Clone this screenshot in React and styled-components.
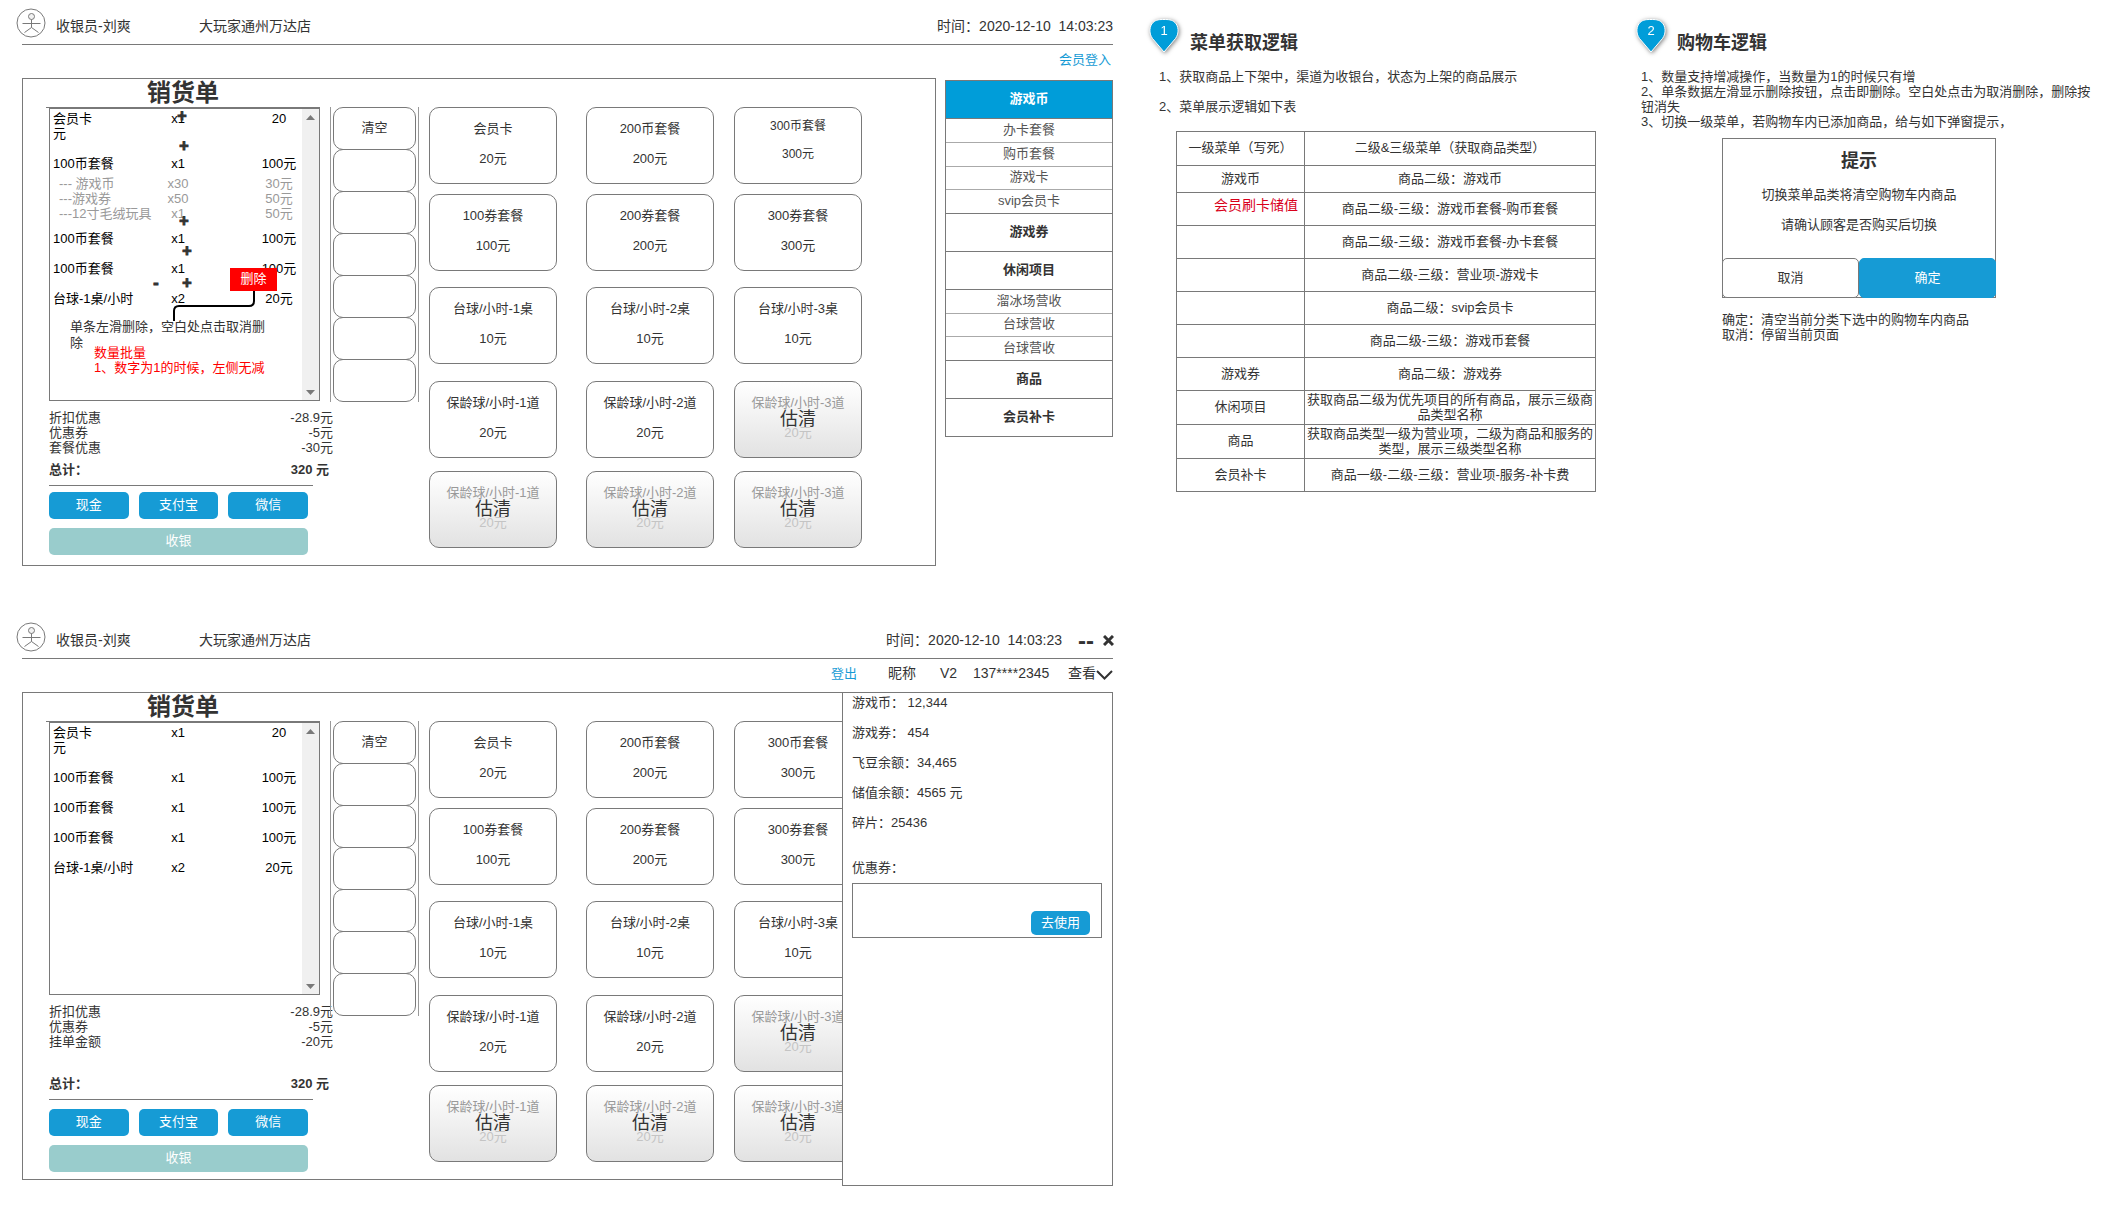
import React from "react";
import styled, { createGlobalStyle } from "styled-components";

const GlobalStyle = createGlobalStyle`
  * {
    box-sizing: border-box;
  }

  body {
    margin: 0;
    background: #fff;
    color: #333;
    font-family: "Liberation Sans", "Noto Sans CJK SC", sans-serif;
    font-size: 13px;
    line-height: 15px;
  }

  h1, h2, h3, p, ul, dl, dd {
    margin: 0;
    padding: 0;
  }

  ul {
    list-style: none;
  }

  button {
    margin: 0;
    padding: 0;
    border: 0;
    background: none;
    color: inherit;
    font: inherit;
    cursor: pointer;
  }
`;

const Page = styled.main`
  display: grid;
  grid-template-columns: minmax(0, 1091fr) minmax(0, 453fr) minmax(0, 468fr);
  column-gap: 34px;
  min-height: 100vh;
  padding: 0 0 32px 22px;
`;

const Terminals = styled.div`
  display: flex;
  flex-direction: column;
  gap: 48px;
`;

/* ---------- terminal header ---------- */

const TopBar = styled.header`
  display: flex;
  align-items: center;
  height: 45px;
  padding-top: 8px;
  border-bottom: 1px solid #797979;
  font-size: 14px;
  white-space: nowrap;
`;

const Avatar = styled.svg`
  flex: none;
  align-self: flex-start;
  margin-left: -6px;
`;

const Cashier = styled.span`
  width: 143px;
  margin-left: 10px;
`;

const Clock = styled.time`
  margin-left: auto;
`;

const WindowControls = styled.div`
  display: flex;
  align-items: center;
  gap: 9px;
  margin: 0 -1px 0 16px;
`;

const Minimize = styled.button`
  font-size: 24px;
  font-weight: bold;
`;

const Close = styled.button`
  display: flex;
`;

const MemberBar = styled.div`
  display: flex;
  justify-content: flex-end;
  align-items: center;
  height: 28px;
  margin-bottom: 5px;
`;

const BlueLink = styled.a`
  padding-right: 2px;
  color: #169bd5;
  font-size: 13px;
  text-decoration: none;
`;

const MemberInfo = styled.div`
  display: grid;
  grid-template-columns: 57px 52px 33px 95px auto;
  align-items: center;
  font-size: 14px;
`;

const ViewButton = styled.button`
  display: flex;
  align-items: center;
`;

/* ---------- terminal body ---------- */

const Workspace = styled.div`
  position: relative;
  display: flex;
  align-items: flex-start;
  gap: 9px;
`;

const Panel = styled.section`
  flex: 1;
  display: flex;
  align-items: flex-start;
  gap: 10px;
  min-width: 0;
  min-height: 488px;
  padding-left: 23px;
  border: 1px solid #797979;
`;

const Cart = styled.div`
  flex: none;
  width: 274px;
`;

const CartTitle = styled.h1`
  height: 29px;
  border-bottom: 1px solid #797979;
  font-size: 24px;
  line-height: 28px;
  text-align: center;
`;

const CartBody = styled.div`
  margin-left: 3px;
`;

const ListBox = styled.div`
  position: relative;
  display: flex;
  height: ${(p) => p.$height}px;
  border: 1px solid #797979;
  color: #000;
`;

const Items = styled.ul`
  flex: 1;
  padding: 2px 0 0 3px;
`;

const Item = styled.li`
  margin-bottom: 15px;
`;

const ItemRow = styled.div`
  display: grid;
  grid-template-columns: 105px 40px 1fr;
`;

const Name = styled.span`
  white-space: pre-line;
`;

const Qty = styled.span`
  text-align: center;
`;

const Price = styled.span`
  justify-self: end;
  width: 46px;
  text-align: center;
`;

const SubItems = styled.ul`
  margin: 5px 0 -5px;
  color: #999;

  ${Name} {
    padding-left: 6px;
    white-space: nowrap;
  }
`;

const ScrollTrack = styled.div`
  display: flex;
  flex-direction: column;
  justify-content: space-between;
  align-items: center;
  width: 17px;
  padding: 6px 0 5px;
  background: #f0f0f0;
`;

const Step = styled.button`
  position: absolute;
  left: ${(p) => p.$x}px;
  top: ${(p) => p.$y}px;
  width: 12px;
  height: 12px;
  color: #333;
  font-size: 16px;
  font-weight: bold;
  line-height: 12px;
  -webkit-text-stroke: 1px #333;
`;

const DeleteButton = styled.button`
  position: absolute;
  left: 180px;
  top: 159px;
  width: 47px;
  height: 23px;
  padding-bottom: 2px;
  background: #f00;
  color: #fff;
`;

const Connector = styled.svg`
  position: absolute;
  left: 122px;
  top: 182px;
`;

const SwipeHint = styled.p`
  position: absolute;
  left: 20px;
  top: 210px;
  width: 200px;
  color: #333;
  line-height: 16px;
`;

const QtyHint = styled.p`
  position: absolute;
  left: 44px;
  top: 236px;
  color: #f00;
  white-space: nowrap;
`;

/* amounts stick out past the list on the right */
const Amounts = styled.dl`
  margin: 0 -13px 0 0;
  padding-top: 9px;
`;

const Amount = styled.div`
  display: flex;
  justify-content: space-between;
`;

const Total = styled(Amount)`
  margin-top: ${(p) => p.$gap}px;
  padding-right: 4px;
  font-weight: bold;
`;

const Rule = styled.hr`
  width: 264px;
  margin: 8px 0 0;
  border: 0;
  border-top: 1px solid #797979;
`;

const PayButtons = styled.div`
  display: grid;
  grid-template-columns: repeat(3, 1fr);
  gap: 9px 10px;
  width: 259px;
  margin-top: ${(p) => p.$gap}px;
`;

const PayButton = styled.button`
  height: 27px;
  padding-bottom: 2px;
  border-radius: 5px;
  background: #169bd5;
  color: #fff;
`;

const CheckoutButton = styled(PayButton)`
  grid-column: 1 / -1;
  background: #99cccc;
`;

const Tabs = styled.div`
  flex: none;
  display: flex;
  flex-direction: column;
  width: 89px;
  margin-top: 28px;
  padding: 0 2px;
  border: solid #999;
  border-width: 0 1px;
`;

const Tab = styled.button`
  height: 43px;
  padding-bottom: 2px;
  border: 1px solid #797979;
  border-radius: 10px;

  & + & {
    margin-top: -1px;
  }
`;

const Tiles = styled.div`
  display: grid;
  grid-template-columns: 157px 148px 128px;
  grid-template-rows: 87px 93px 94px 90px 77px;
  margin-top: 28px;
`;

const Tile = styled.button`
  position: relative;
  display: flex;
  flex-direction: column;
  align-items: center;
  gap: ${(p) => (p.$small ? 13 : 15)}px;
  width: 128px;
  height: 77px;
  padding-top: ${(p) => (p.$small ? 11 : 13)}px;
  border: 1px solid #797979;
  border-radius: 10px;
  background: ${(p) =>
    p.$soldOut ? "linear-gradient(#fff, #e2e2e2)" : "#fff"};
  color: ${(p) => (p.$soldOut ? "#999" : "#333")};
  font-size: ${(p) => (p.$small ? 12 : 13)}px;
  white-space: nowrap;
`;

const TilePrice = styled.span`
  color: ${(p) => (p.$soldOut ? "#c4c4c4" : "inherit")};
`;

const SoldOut = styled.span`
  position: absolute;
  inset: 0;
  color: #333;
  font-size: 18px;
  line-height: 75px;
`;

/* ---------- category menu ---------- */

const Menu = styled.nav`
  flex: none;
  width: 168px;
  margin-top: 2px;
  border: solid #797979;
  border-width: 1px 1px 0;
`;

const MenuGroup = styled.button`
  display: block;
  width: 100%;
  height: 38px;
  padding-bottom: 2px;
  border-bottom: 1px solid #797979;
  background: ${(p) => (p.$active ? "#009dd9" : "#fff")};
  color: ${(p) => (p.$active ? "#fff" : "#333")};
  font-weight: bold;
`;

const SubMenu = styled.div`
  display: grid;
  grid-auto-rows: 1fr;
  height: ${(p) => p.$height}px;
`;

const SubMenuItem = styled.button`
  padding-bottom: 2px;
  border-bottom: 1px solid #aaa;
  color: #555;

  &:last-child {
    border-color: #797979;
  }
`;

/* ---------- member drawer ---------- */

const Drawer = styled.aside`
  position: absolute;
  top: 0;
  right: 0;
  bottom: -6px;
  width: 271px;
  padding: 2px 10px 0 9px;
  border: 1px solid #797979;
  background: #fff;
`;

const Balances = styled.ul`
  display: flex;
  flex-direction: column;
  gap: 15px;
  margin-bottom: 30px;
`;

const Coupon = styled.div`
  display: flex;
  justify-content: flex-end;
  align-items: flex-end;
  height: 55px;
  margin-top: 8px;
  padding: 0 11px 2px 0;
  border: 1px solid #797979;
`;

const UseButton = styled.button`
  width: 59px;
  height: 24px;
  padding-bottom: 2px;
  border-radius: 5px;
  background: #169bd5;
  color: #fff;
`;

/* ---------- notes ---------- */

const Note = styled.section`
  min-width: 0;
`;

const NoteHead = styled.header`
  display: flex;
  align-items: flex-end;
  gap: 9px;
  margin: 14px 0 15px;
`;

const NoteTitle = styled.h2`
  font-size: 18px;
  line-height: 22px;
`;

const Pin = styled.svg`
  display: block;
  overflow: visible;
  filter: drop-shadow(1px 1px 2px rgba(0, 0, 0, 0.5));
`;

const NoteText = styled.div`
  display: flex;
  flex-direction: column;
  gap: ${(p) => p.$gap || 0}px;
  padding: 0 4px 0 ${(p) => p.$indent}px;
`;

const TableWrap = styled.div`
  margin: 17px 4px 0 29px;
`;

const Table = styled.table`
  width: 100%;
  border-collapse: collapse;
  table-layout: fixed;
`;

const Cell = styled.td`
  height: ${(p) => p.$height}px;
  padding: 0 1px 2px;
  border: 1px solid #797979;
  font-weight: normal;
  text-align: center;
`;

const HeadCell = styled(Cell).attrs({ as: "th" })`
  &:first-child {
    width: 128px;
  }
`;

const RedCell = styled(Cell)`
  padding: 5px 6px 0 0;
  color: #d9001b;
  font-size: 14px;
  text-align: right;
  vertical-align: top;
`;

const DialogBlock = styled.div`
  width: 274px;
  margin: 9px 0 0 88px;
`;

const Dialog = styled.div`
  display: flex;
  flex-direction: column;
  align-items: center;
  gap: 15px;
  padding-top: 11px;
  border: 1px solid #797979;
`;

const DialogTitle = styled.h3`
  font-size: 18px;
  line-height: 22px;
`;

const DialogButtons = styled.div`
  display: flex;
  align-self: stretch;
  margin: 11px -1px -1px;
`;

const DialogButton = styled.button`
  flex: 1;
  height: 40px;
  padding-bottom: 2px;
  border: 1px solid ${(p) => (p.$primary ? "#169bd5" : "#797979")};
  border-radius: 5px;
  background: ${(p) => (p.$primary ? "#169bd5" : "#fff")};
  color: ${(p) => (p.$primary ? "#fff" : "#333")};
`;

const DialogNotes = styled.div`
  margin-top: 14px;
`;

/* ---------- data ---------- */

const cartWithBundle = [
  { name: "会员卡\n元", qty: "x1", price: "20" },
  {
    name: "100币套餐",
    qty: "x1",
    price: "100元",
    parts: [
      { name: "--- 游戏币", qty: "x30", price: "30元" },
      { name: "---游戏券", qty: "x50", price: "50元" },
      { name: "---12寸毛绒玩具", qty: "x1", price: "50元" },
    ],
  },
  { name: "100币套餐", qty: "x1", price: "100元" },
  { name: "100币套餐", qty: "x1", price: "100元" },
  { name: "台球-1桌/小时", qty: "x2", price: "20元" },
];

const cartPlain = cartWithBundle.map(({ parts, ...item }) => item);

const steps = [
  { sign: "+", x: 126, y: 1 },
  { sign: "+", x: 128, y: 31 },
  { sign: "+", x: 128, y: 106 },
  { sign: "+", x: 131, y: 136 },
  { sign: "+", x: 131, y: 168 },
  { sign: "-", x: 100, y: 168 },
];

const tiles = [
  { name: "会员卡", price: "20元" },
  { name: "200币套餐", price: "200元" },
  { name: "300币套餐", price: "300元" },
  { name: "100券套餐", price: "100元" },
  { name: "200券套餐", price: "200元" },
  { name: "300券套餐", price: "300元" },
  { name: "台球/小时-1桌", price: "10元" },
  { name: "台球/小时-2桌", price: "10元" },
  { name: "台球/小时-3桌", price: "10元" },
  { name: "保龄球/小时-1道", price: "20元" },
  { name: "保龄球/小时-2道", price: "20元" },
  { name: "保龄球/小时-3道", price: "20元", soldOut: true },
  { name: "保龄球/小时-1道", price: "20元", soldOut: true },
  { name: "保龄球/小时-2道", price: "20元", soldOut: true },
  { name: "保龄球/小时-3道", price: "20元", soldOut: true },
];

const menu = [
  {
    name: "游戏币",
    height: 95,
    children: ["办卡套餐", "购币套餐", "游戏卡", "svip会员卡"],
  },
  { name: "游戏券" },
  {
    name: "休闲项目",
    height: 71,
    children: ["溜冰场营收", "台球营收", "台球营收"],
  },
  { name: "商品" },
  { name: "会员补卡" },
];

const rules = [
  { first: "游戏币", second: "商品二级：游戏币", height: 27 },
  { first: "会员刷卡储值", second: "商品二级-三级：游戏币套餐-购币套餐", red: true },
  { first: "", second: "商品二级-三级：游戏币套餐-办卡套餐" },
  { first: "", second: "商品二级-三级：营业项-游戏卡" },
  { first: "", second: "商品二级：svip会员卡" },
  { first: "", second: "商品二级-三级：游戏币套餐" },
  { first: "游戏券", second: "商品二级：游戏券" },
  {
    first: "休闲项目",
    second: "获取商品二级为优先项目的所有商品，展示三级商品类型名称",
    height: 34,
  },
  {
    first: "商品",
    second: "获取商品类型一级为营业项，二级为商品和服务的类型，展示三级类型名称",
    height: 34,
  },
  { first: "会员补卡", second: "商品一级-二级-三级：营业项-服务-补卡费" },
];

/* ---------- parts ---------- */

function Header({ children }) {
  return (
    <TopBar>
      <Avatar width="30" height="30" viewBox="0 0 30 30" fill="none" stroke="#797979">
        <circle cx="15" cy="15" r="14" />
        <circle cx="15.5" cy="8.5" r="3" fill="#f2f2f2" />
        <path d="M6.5 15.5h18M15.5 11.5v8M8.5 24.5l7-5 7 5" />
      </Avatar>
      <Cashier>收银员-刘爽</Cashier>
      <span>大玩家通州万达店</span>
      <Clock>时间：2020-12-10{"\u00a0\u00a0"}14:03:23</Clock>
      {children}
    </TopBar>
  );
}

function CartLine({ item }) {
  return (
    <ItemRow>
      <Name>{item.name}</Name>
      <Qty>{item.qty}</Qty>
      <Price>{item.price}</Price>
    </ItemRow>
  );
}

function CartPanel({ items, listHeight, amounts, totalGap, payGap, children }) {
  return (
    <Cart>
      <CartTitle>销货单</CartTitle>
      <CartBody>
        <ListBox $height={listHeight}>
          <Items>
            {items.map((item, i) => (
              <Item key={i}>
                <CartLine item={item} />
                {item.parts && (
                  <SubItems>
                    {item.parts.map((part) => (
                      <li key={part.name}>
                        <CartLine item={part} />
                      </li>
                    ))}
                  </SubItems>
                )}
              </Item>
            ))}
          </Items>
          <ScrollTrack>
            <svg width="9" height="5" fill="#797979">
              <path d="M0 5 4.5 0 9 5z" />
            </svg>
            <svg width="9" height="5" fill="#797979">
              <path d="M0 0h9L4.5 5z" />
            </svg>
          </ScrollTrack>
          {children}
        </ListBox>
        <Amounts>
          {amounts.map(([label, value]) => (
            <Amount key={label}>
              <dt>{label}</dt>
              <dd>{value}</dd>
            </Amount>
          ))}
          <Total $gap={totalGap}>
            <dt>总计：</dt>
            <dd>320 元</dd>
          </Total>
        </Amounts>
        <Rule />
        <PayButtons $gap={payGap}>
          <PayButton>现金</PayButton>
          <PayButton>支付宝</PayButton>
          <PayButton>微信</PayButton>
          <CheckoutButton>收银</CheckoutButton>
        </PayButtons>
      </CartBody>
    </Cart>
  );
}

function TabColumn() {
  return (
    <Tabs>
      {["清空", "", "", "", "", "", ""].map((label, i) => (
        <Tab key={i}>{label}</Tab>
      ))}
    </Tabs>
  );
}

function TileGrid({ smallIndex }) {
  return (
    <Tiles>
      {tiles.map((tile, i) => (
        <Tile key={i} $soldOut={tile.soldOut} $small={i === smallIndex}>
          <span>{tile.name}</span>
          <TilePrice $soldOut={tile.soldOut}>{tile.price}</TilePrice>
          {tile.soldOut && <SoldOut>估清</SoldOut>}
        </Tile>
      ))}
    </Tiles>
  );
}

function CategoryMenu() {
  return (
    <Menu>
      {menu.map((group, i) => (
        <React.Fragment key={group.name}>
          <MenuGroup $active={i === 0}>{group.name}</MenuGroup>
          {group.children && (
            <SubMenu $height={group.height}>
              {group.children.map((name, j) => (
                <SubMenuItem key={j}>{name}</SubMenuItem>
              ))}
            </SubMenu>
          )}
        </React.Fragment>
      ))}
    </Menu>
  );
}

function GuestTerminal() {
  return (
    <section>
      <Header />
      <MemberBar>
        <BlueLink href="#login">会员登入</BlueLink>
      </MemberBar>
      <Workspace>
        <Panel>
          <CartPanel
            items={cartWithBundle}
            listHeight={293}
            amounts={[
              ["折扣优惠", "-28.9元"],
              ["优惠券", "-5元"],
              ["套餐优惠", "-30元"],
            ]}
            totalGap={7}
            payGap={6}
          >
            {steps.map((step, i) => (
              <Step key={i} $x={step.x} $y={step.y}>
                {step.sign}
              </Step>
            ))}
            <Connector width="84" height="30" fill="none" stroke="#000" strokeWidth="2">
              <path d="M82 0v10q0 5-5 5H7q-5 0-5 5v10" />
            </Connector>
            <DeleteButton>删除</DeleteButton>
            <SwipeHint>单条左滑删除，空白处点击取消删除</SwipeHint>
            <QtyHint>
              数量批量
              <br />
              1、数字为1的时候，左侧无减
            </QtyHint>
          </CartPanel>
          <TabColumn />
          <TileGrid smallIndex={2} />
        </Panel>
        <CategoryMenu />
      </Workspace>
    </section>
  );
}

function MemberTerminal() {
  return (
    <section>
      <Header>
        <WindowControls>
          <Minimize aria-label="最小化">--</Minimize>
          <Close aria-label="关闭">
            <svg width="11" height="11" stroke="#333" strokeWidth="3">
              <path d="M1 1l9 9M10 1l-9 9" />
            </svg>
          </Close>
        </WindowControls>
      </Header>
      <MemberBar>
        <MemberInfo>
          <BlueLink href="#logout">登出</BlueLink>
          <span>昵称</span>
          <span>V2</span>
          <span>137****2345</span>
          <ViewButton>
            查看
            <svg width="17" height="14" fill="none" stroke="#333" strokeWidth="2">
              <path d="M1 5l7.500 7.500L16 5" />
            </svg>
          </ViewButton>
        </MemberInfo>
      </MemberBar>
      <Workspace>
        <Panel>
          <CartPanel
            items={cartPlain}
            listHeight={273}
            amounts={[
              ["折扣优惠", "-28.9元"],
              ["优惠券", "-5元"],
              ["挂单金额", "-20元"],
            ]}
            totalGap={27}
            payGap={9}
          />
          <TabColumn />
          <TileGrid />
        </Panel>
        <Drawer>
          <Balances>
            <li>游戏币：&nbsp;12,344</li>
            <li>游戏券：&nbsp;454</li>
            <li>飞豆余额：34,465</li>
            <li>储值余额：4565 元</li>
            <li>碎片：25436</li>
          </Balances>
          <p>优惠券：</p>
          <Coupon>
            <UseButton>去使用</UseButton>
          </Coupon>
        </Drawer>
      </Workspace>
    </section>
  );
}

function NoteHeader({ number, title }) {
  return (
    <NoteHead>
      <Pin width="34" height="40">
        <path
          d="M17 38 5.500 24.500C1.500 19 2.500 12 6 8.500 9 5.500 13 5.500 17 5.500s8 0 11 3c3.500 3.500 4.500 10.500.5 16z"
          fill="#009dd9"
          stroke="#fff"
        />
        <text x="17" y="21" fill="#fff" fontSize="13" textAnchor="middle">
          {number}
        </text>
      </Pin>
      <NoteTitle>{title}</NoteTitle>
    </NoteHead>
  );
}

function MenuNote() {
  return (
    <Note>
      <NoteHeader number={1} title="菜单获取逻辑" />
      <NoteText $indent={12} $gap={15}>
        <p>1、获取商品上下架中，渠道为收银台，状态为上架的商品展示</p>
        <p>2、菜单展示逻辑如下表</p>
      </NoteText>
      <TableWrap>
        <Table>
          <thead>
            <tr>
              <HeadCell $height={34}>一级菜单（写死）</HeadCell>
              <HeadCell $height={34}>二级&三级菜单（获取商品类型）</HeadCell>
            </tr>
          </thead>
          <tbody>
            {rules.map((rule, i) => {
              const First = rule.red ? RedCell : Cell;
              const height = rule.height || 33;
              return (
                <tr key={i}>
                  <First $height={height}>{rule.first}</First>
                  <Cell $height={height}>{rule.second}</Cell>
                </tr>
              );
            })}
          </tbody>
        </Table>
      </TableWrap>
    </Note>
  );
}

function CartNote() {
  return (
    <Note>
      <NoteHeader number={2} title="购物车逻辑" />
      <NoteText $indent={7}>
        <p>1、数量支持增减操作，当数量为1的时候只有增</p>
        <p>2、单条数据左滑显示删除按钮，点击即删除。空白处点击为取消删除，删除按钮消失</p>
        <p>3、切换一级菜单，若购物车内已添加商品，给与如下弹窗提示，</p>
      </NoteText>
      <DialogBlock>
        <Dialog role="dialog" aria-label="提示">
          <DialogTitle>提示</DialogTitle>
          <p>切换菜单品类将清空购物车内商品</p>
          <p>请确认顾客是否购买后切换</p>
          <DialogButtons>
            <DialogButton>取消</DialogButton>
            <DialogButton $primary>确定</DialogButton>
          </DialogButtons>
        </Dialog>
        <DialogNotes>
          <p>确定：清空当前分类下选中的购物车内商品</p>
          <p>取消：停留当前页面</p>
        </DialogNotes>
      </DialogBlock>
    </Note>
  );
}

function App() {
  return (
    <>
      <GlobalStyle />
      <Page lang="zh-CN">
        <Terminals>
          <GuestTerminal />
          <MemberTerminal />
        </Terminals>
        <MenuNote />
        <CartNote />
      </Page>
    </>
  );
}

export default App;
